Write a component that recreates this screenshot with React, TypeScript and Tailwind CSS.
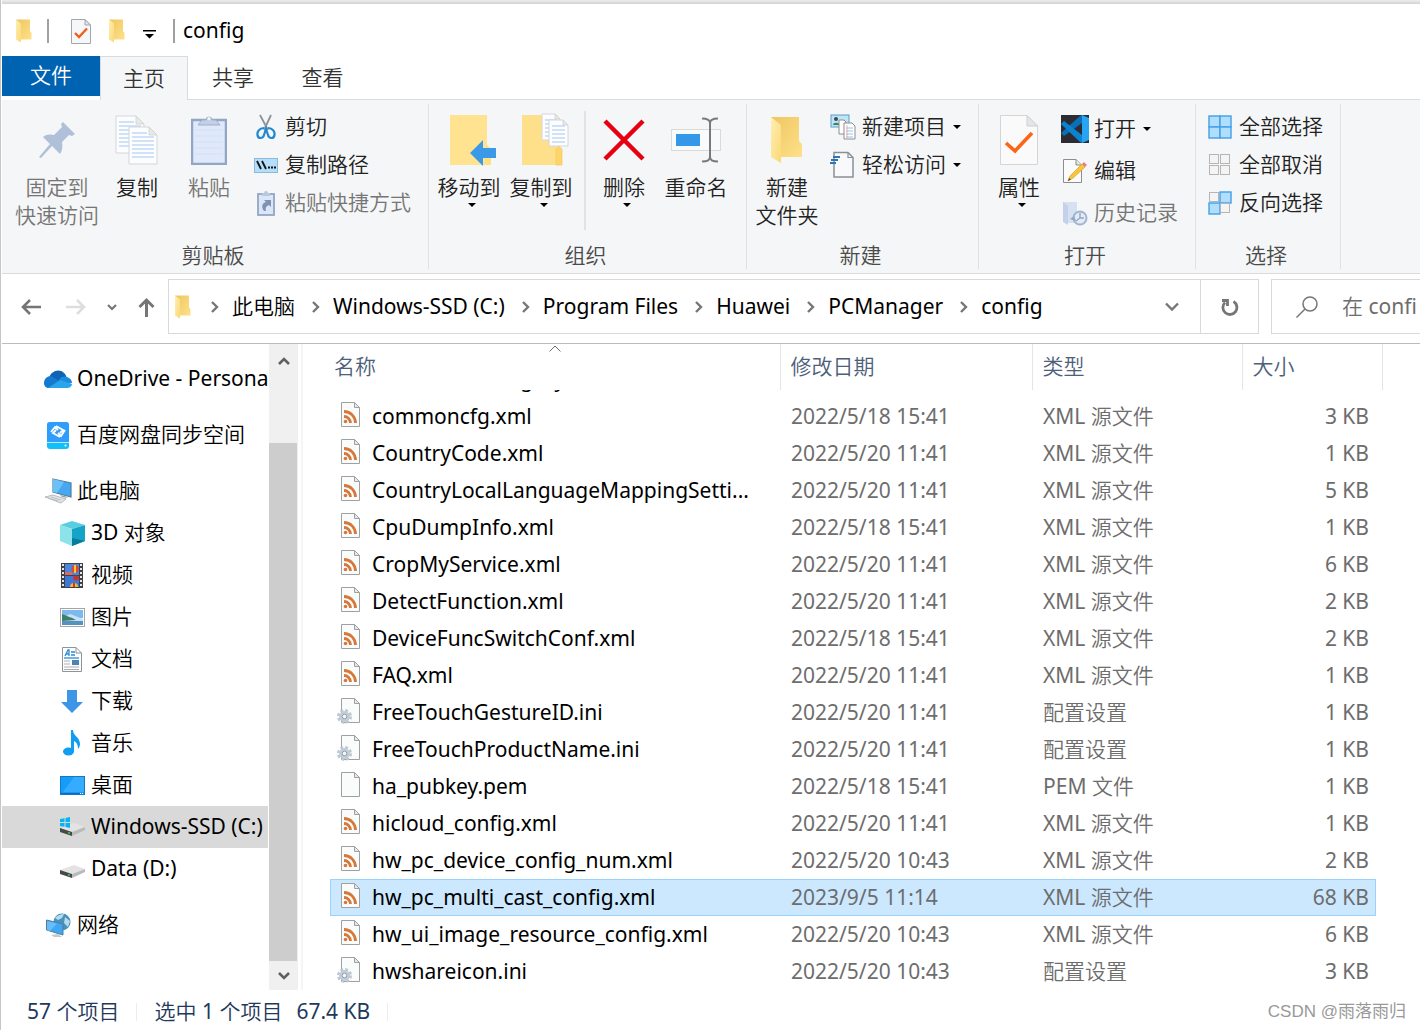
import React, { useState } from "react";

interface FileRow {
  name: string;
  date: string;
  type: string;
  size: string;
  kind: "xml" | "ini" | "plain";
}

const files: FileRow[] = [
  { name: "commoncfg.xml", date: "2022/5/18 15:41", type: "XML 源文件", size: "3 KB", kind: "xml" },
  { name: "CountryCode.xml", date: "2022/5/20 11:41", type: "XML 源文件", size: "1 KB", kind: "xml" },
  { name: "CountryLocalLanguageMappingSetti...", date: "2022/5/20 11:41", type: "XML 源文件", size: "5 KB", kind: "xml" },
  { name: "CpuDumpInfo.xml", date: "2022/5/18 15:41", type: "XML 源文件", size: "1 KB", kind: "xml" },
  { name: "CropMyService.xml", date: "2022/5/20 11:41", type: "XML 源文件", size: "6 KB", kind: "xml" },
  { name: "DetectFunction.xml", date: "2022/5/20 11:41", type: "XML 源文件", size: "2 KB", kind: "xml" },
  { name: "DeviceFuncSwitchConf.xml", date: "2022/5/18 15:41", type: "XML 源文件", size: "2 KB", kind: "xml" },
  { name: "FAQ.xml", date: "2022/5/20 11:41", type: "XML 源文件", size: "1 KB", kind: "xml" },
  { name: "FreeTouchGestureID.ini", date: "2022/5/20 11:41", type: "配置设置", size: "1 KB", kind: "ini" },
  { name: "FreeTouchProductName.ini", date: "2022/5/20 11:41", type: "配置设置", size: "1 KB", kind: "ini" },
  { name: "ha_pubkey.pem", date: "2022/5/18 15:41", type: "PEM 文件", size: "1 KB", kind: "plain" },
  { name: "hicloud_config.xml", date: "2022/5/20 11:41", type: "XML 源文件", size: "1 KB", kind: "xml" },
  { name: "hw_pc_device_config_num.xml", date: "2022/5/20 10:43", type: "XML 源文件", size: "2 KB", kind: "xml" },
  { name: "hw_pc_multi_cast_config.xml", date: "2023/9/5 11:14", type: "XML 源文件", size: "68 KB", kind: "xml" },
  { name: "hw_ui_image_resource_config.xml", date: "2022/5/20 10:43", type: "XML 源文件", size: "6 KB", kind: "xml" },
  { name: "hwshareicon.ini", date: "2022/5/20 10:43", type: "配置设置", size: "3 KB", kind: "ini" },
];

const crumbs = ["此电脑", "Windows-SSD (C:)", "Program Files", "Huawei", "PCManager", "config"];

/* ---------- shared icons ---------- */

function FolderIcon({ className }: { className: string }) {
  return (
    <svg className={className} viewBox="0 0 34 48">
      <defs>
        <linearGradient id="folderBack" x1="0" y1="0" x2="1" y2="1">
          <stop offset="0" stopColor="#edc660" />
          <stop offset="1" stopColor="#ffe08a" />
        </linearGradient>
        <linearGradient id="folderFlap" x1="0" y1="0" x2="1" y2="1">
          <stop offset="0" stopColor="#ffefb4" />
          <stop offset="1" stopColor="#fbd873" />
        </linearGradient>
      </defs>
      <path d="M1 1H29V25L32 28V41H10Z" fill="url(#folderBack)" />
      <path d="M1 1L11 9V47L1 41Z" fill="url(#folderFlap)" />
    </svg>
  );
}

function CaretDown() {
  return (
    <svg width="8" height="4" viewBox="0 0 8 4" className="shrink-0">
      <path d="M0 0H8L4 4Z" fill="#000" />
    </svg>
  );
}

function Crumb() {
  return (
    <svg width="9" height="12" viewBox="0 0 9 12" fill="none" stroke="#767676" strokeWidth="2.400">
      <path d="M2 1L7 6L2 11" />
    </svg>
  );
}

function CheckedDoc() {
  return (
    <svg width="38" height="50" viewBox="0 0 38 50">
      <path d="M.5 .5H27L37.500 11V49.500H.5Z" fill="#fafafa" stroke="#d5d5d5" />
      <path d="M27 .5V11H37.500Z" fill="#e6e6e6" stroke="#cfcfcf" />
      <path d="M6 28L15 36L32 18" fill="none" stroke="#fb6518" strokeWidth="3.600" />
    </svg>
  );
}

function SmallCheckedDoc() {
  return (
    <svg width="20" height="25" viewBox="0 0 20 25">
      <path d="M.5 .5H14L19.500 6V24.500H.5Z" fill="#f6f7f9" stroke="#a3a6aa" />
      <path d="M14 .5V6H19.500Z" fill="#e2e4e6" stroke="#a3a6aa" />
      <path d="M4 14L8 18L16 9.500" fill="none" stroke="#f0601c" strokeWidth="2.400" />
    </svg>
  );
}

/* ---------- ribbon icons ---------- */

function PinIcon() {
  return (
    <svg width="38" height="38" viewBox="0 0 38 38" fill="#b0c0d8">
      <path d="M25 1L37 13L34 15L31 14L24 21C25 26 24 30 22 33L14 25L3 37L1 36L12 23L5 16C8 13 13 13 16 14L24 6L23 3Z" />
    </svg>
  );
}

function Page({ x, y, w, h }: { x: number; y: number; w: number; h: number }) {
  const f = Math.round(w * 0.28);
  const lines: number[] = [];
  for (let i = y + 6; i < y + h - 3; i += 4) lines.push(i);
  return (
    <g>
      <path d={`M${x} ${y}H${x + w - f}L${x + w} ${y + f}V${y + h}H${x}Z`} fill="#fcfdfe" stroke="#d3d6da" />
      {lines.map((l) => (
        <path key={l} d={`M${x + 3} ${l}H${l < y + f + 1 ? x + w - f - 2 : x + w - 3}`} stroke="#c3d9f6" strokeWidth="1.5" />
      ))}
      <path d={`M${x + w - f} ${y}V${y + f}H${x + w}Z`} fill="#e9e9e9" stroke="#cfcfcf" strokeWidth=".8" />
    </g>
  );
}

function CopyIcon() {
  return (
    <svg width="44" height="50" viewBox="0 0 44 50">
      <Page x={1} y={1} w={28} h={37} />
      <Page x={14} y={12} w={28} h={37} />
    </svg>
  );
}

function PasteIcon() {
  return (
    <svg width="36" height="50" viewBox="0 0 36 50">
      <rect x="1" y="5" width="34" height="44" fill="#dfe9fa" stroke="#93a6c4" strokeWidth="2.500" />
      <path d="M7 10L11 5H15A3 3 0 0 1 21 5H25L29 10Z" fill="#c3d0e6" stroke="#9fb0cb" />
      <circle cx="18" cy="3.500" r="1.500" fill="#f5f6f7" />
      <path d="M4 15H32M4 21H32M4 27H32M4 33H32M4 39H32" stroke="#d3e0f5" />
    </svg>
  );
}

function MoveToIcon() {
  return (
    <svg width="58" height="54" viewBox="-8 0 58 54">
      <path d="M2 2H39V32L43 36V52H2Z" fill="#ffdf84" />
      <path d="M2 2H39V32L37 36V52H2Z" fill="#ffe391" />
      <path d="M22 40L35 27V35H48V45H35V53Z" fill="#3b9ae8" />
    </svg>
  );
}

function CopyToIcon() {
  return (
    <svg width="58" height="54" viewBox="-8 0 58 54">
      <path d="M2 2H38V52H2Z" fill="#ffe08a" />
      <path d="M36 52V36L39 33L42 36V52Z" fill="#fdd568" stroke="#f2c85a" strokeWidth=".6" />
      <Page x={22} y={1} w={18} h={26} />
      <Page x={29} y={7} w={19} h={26} />
    </svg>
  );
}

function DeleteIcon() {
  return (
    <svg width="42" height="42" viewBox="0 0 42 42" stroke="#e60012" strokeWidth="4.500">
      <path d="M2 2L40 40M40 2L2 40" />
    </svg>
  );
}

function RenameIcon() {
  return (
    <svg width="50" height="46" viewBox="0 0 50 46" fill="none">
      <rect x=".5" y="12.500" width="49" height="21" fill="#f9fafb" stroke="#dadada" />
      <rect x="5" y="17" width="24" height="12" fill="#3497e8" />
      <path d="M31 1.500C36 1.500 39 3 39 6V40C39 43 36 44.500 31 44.500M47 1.500C42 1.500 39 3 39 6M39 40C39 43 42 44.500 47 44.500" stroke="#7a7a7a" strokeWidth="2" />
    </svg>
  );
}

function CutIcon() {
  return (
    <svg width="20" height="26" viewBox="0 0 20 26" fill="none">
      <path d="M4 1L12 16M15 1L8 16" stroke="#8d9299" strokeWidth="1.800" />
      <path d="M8 14C3 14 1 18 1.500 21C2 25 7 25 8 21L10 15L12 21C13 25 18 25 18.500 21C19 18 17 14 12 14" stroke="#1e88d2" strokeWidth="2.200" />
    </svg>
  );
}

function CopyPathIcon() {
  return (
    <svg width="24" height="15" viewBox="0 0 24 15">
      <rect x=".5" y=".5" width="23" height="14" fill="#b4defa" stroke="#8bb9d8" />
      <path d="M3 3L7 11M8 3L12 11" stroke="#111" strokeWidth="1.800" />
      <path d="M14 9.500H16M17 9.500H19M20 9.500H22" stroke="#111" strokeWidth="2" />
    </svg>
  );
}

function PasteLinkIcon() {
  return (
    <svg width="18" height="26" viewBox="0 0 18 26">
      <rect x="1" y="4" width="16" height="21" fill="#dbe6f7" stroke="#93a6c4" strokeWidth="1.800" />
      <path d="M5 6V3H7A2 2 0 0 1 11 3H13V6Z" fill="#b9c7df" />
      <path d="M7 21C4 17 5 13 9 12L7 10H14V17L12 15C9 16 8 18 9 21Z" fill="#7d92b5" />
    </svg>
  );
}

function NewItemIcon() {
  return (
    <svg width="26" height="26" viewBox="0 0 26 26">
      <rect x="1" y="1" width="18" height="12" fill="#bfe3f8" stroke="#5f9cc5" />
      <circle cx="6" cy="5" r="2" fill="#3c4a50" />
      <path d="M3 11C3 8 9 8 10 11Z" fill="#2d8a66" />
      <path d="M9 6H14L16 8V20H9Z" fill="#fff" stroke="#8d8d8d" />
      <path d="M14 9H22L25 12V25H14Z" fill="#fff" stroke="#8d8d8d" />
      <path d="M16 14H23M16 17H23M16 20H23M16 23H23" stroke="#9ebde8" />
      <path d="M17 11V24" stroke="#e8a0a0" strokeWidth=".8" />
    </svg>
  );
}

function EasyAccessIcon() {
  return (
    <svg width="26" height="28" viewBox="0 0 26 28">
      <path d="M4 1.500H18L23 6.500V26H4Z" fill="#f8f9fa" stroke="#8a8f94" strokeWidth="1.500" />
      <path d="M18 1.500V6.500H23" fill="none" stroke="#8a8f94" strokeWidth="1.200" />
      <path d="M3 6H10M1 9H8M0 12H6" stroke="#2f74b5" strokeWidth="1.800" />
    </svg>
  );
}

function VsCodeIcon() {
  return (
    <svg width="28" height="28" viewBox="0 0 28 28">
      <rect width="28" height="28" fill="#2c2c32" />
      <path d="M0 18L3 21L21 8V0L19 1Z" fill="#0a6fb8" />
      <path d="M0 9L3 6L21 20V28L19 27Z" fill="#0b83d2" />
      <path d="M21 0L28 3V25L21 28Z" fill="#27a4f2" />
    </svg>
  );
}

function EditIcon() {
  return (
    <svg width="26" height="26" viewBox="0 0 26 26">
      <path d="M1.500 1.500H14L19.500 7V24.500H1.500Z" fill="#fbfbfb" stroke="#8d8d8d" />
      <path d="M14 1.500V7H19.500" fill="#e4e4e4" stroke="#8d8d8d" />
      <path d="M6 23L8 18L20 6L23 9L11 20Z" fill="#f8c63c" stroke="#d99c1c" strokeWidth=".7" />
      <path d="M20 6L22 4L25 7L23 9Z" fill="#e8808b" />
      <path d="M6 23L7 20L9 21.500Z" fill="#555" />
    </svg>
  );
}

function HistoryIcon() {
  return (
    <svg width="26" height="26" viewBox="0 0 26 26">
      <path d="M1 2H15V14L16 23H6L1 20Z" fill="#d5e0f1" />
      <path d="M1 2L6 6V25L1 22Z" fill="#c4d2e9" />
      <circle cx="18" cy="18" r="6.500" fill="#e4ebf7" stroke="#a3b4d0" strokeWidth="2" />
      <path d="M18 13V18L14 21M18 18H22" fill="none" stroke="#93a6c4" strokeWidth="1.400" />
      <path d="M8 19L12 16L14 21Z" fill="#93a6c4" />
    </svg>
  );
}

function GridIcon({ on }: { on: boolean[] }) {
  const spots = [
    [1, 1],
    [12, 1],
    [1, 12],
    [12, 12],
  ];
  return (
    <svg width="24" height="24" viewBox="0 0 24 24">
      {spots.map(([x, y], i) =>
        on[i] ? (
          <rect key={i} x={x} y={y} width="11" height="11" fill="#b0deff" stroke="#42a0e6" strokeWidth="1.400" />
        ) : (
          <rect key={i} x={x + 0.5} y={y + 0.5} width="9" height="9" fill="#f4f4f4" stroke="#b5b5b5" />
        )
      )}
    </svg>
  );
}

/* ---------- sidebar icons ---------- */

function OneDriveIcon() {
  return (
    <svg width="28" height="18" viewBox="0 0 28 18">
      <path d="M5 8C7 1 15 -2 20 3C22 5 23 7 22 9L10 13Z" fill="#0f62b4" />
      <path d="M0 13C0 9 3 6 7 6L16 11L6 18H5C2 18 0 16 0 13Z" fill="#1479d0" />
      <path d="M15 10C17 6 21 6 23 7C26 8 28 10 28 13L20 14Z" fill="#1a8ce0" />
      <path d="M4 18L16 10L28 14C28 16 26 18 23 18Z" fill="#2aa5ec" />
    </svg>
  );
}

function BaiduIcon() {
  return (
    <svg width="24" height="27" viewBox="0 0 24 27">
      <rect x="1" y="0" width="22" height="23" rx="2.500" fill="#2f9dfb" />
      <path d="M1 20H23V24Q23 27 20 27H4Q1 27 1 24Z" fill="#10c0f8" />
      <path d="M1 20.500H23" stroke="#bfe9ff" />
      <circle cx="19.500" cy="23.500" r="1" fill="#fff" />
      <path d="M10 4L17 8L14 11M19 8L15 14L12 11M14 15L7 11L10 8M5 10L9 5L12 8" fill="none" stroke="#fff" strokeWidth="1.800" />
    </svg>
  );
}

function PcIcon() {
  return (
    <svg width="28" height="26" viewBox="0 0 28 26">
      <path d="M9 1L27 5V19L9 14Z" fill="#45a8f0" stroke="#51809f" strokeWidth="1.200" />
      <path d="M9 1L20 4L13 15L9 14Z" fill="#6cc2f8" />
      <path d="M16 17L21 18L24 20L18 19Z" fill="#9aa3aa" />
      <path d="M1 19L9 17L22 21L17 25Z" fill="#e2e4e6" stroke="#a7adb3" strokeWidth=".8" />
      <path d="M4 20L14 23M7 19L17 22" stroke="#b0b5ba" strokeWidth=".8" />
    </svg>
  );
}

function CubeIcon() {
  return (
    <svg width="25" height="25" viewBox="0 0 25 25">
      <path d="M0 4L12 0L25 4L12 8Z" fill="#58cfe0" />
      <path d="M0 4L12 8V25L0 20Z" fill="#8ce4ea" />
      <path d="M12 8L25 4V20L12 25Z" fill="#16a3c8" />
      <path d="M12 17L25 20L12 25Z" fill="#077d99" />
    </svg>
  );
}

function VideoIcon() {
  return (
    <svg width="22" height="25" viewBox="0 0 22 25">
      <rect width="22" height="25" fill="#3f4144" />
      <rect x="4" y="1" width="14" height="11" fill="#4b86e0" />
      <rect x="4" y="13" width="14" height="11" fill="#3c78d8" />
      <path d="M2 1V25M20 1V25" stroke="#e6e6e6" strokeWidth="2" strokeDasharray="2 2" />
      <path d="M4 9H11V12H4Z" fill="#d86a6a" />
      <ellipse cx="14" cy="6" rx="3.500" ry="4" fill="#e0482f" />
      <path d="M14 2V10" stroke="#f7c52f" strokeWidth="2" />
      <ellipse cx="15" cy="15" rx="3" ry="2.500" fill="#c7332d" />
      <path d="M9 24A4 4 0 0 1 17 24Z" fill="#f1b62b" />
      <path d="M13 20V24" stroke="#d4382b" strokeWidth="2" />
    </svg>
  );
}

function PictureIcon() {
  return (
    <svg width="25" height="19" viewBox="0 0 25 19">
      <rect x=".5" y=".5" width="24" height="18" fill="#fff" stroke="#a5a5a5" />
      <rect x="2" y="2" width="21" height="8" fill="#7db9ee" />
      <path d="M2 10L10 6L23 11V17H2Z" fill="#c4e2f7" />
      <path d="M2 6C6 8 11 9 16 12L2 13Z" fill="#3f7f66" />
      <rect x="2" y="13" width="21" height="4" fill="#5590bf" />
    </svg>
  );
}

function DocumentIcon() {
  return (
    <svg width="20" height="25" viewBox="0 0 20 25" fill="none">
      <path d="M.5 .5H14L19.500 6V24.500H.5Z" fill="#fdfdfd" stroke="#8f9499" />
      <path d="M14 .5V6H19.500" stroke="#8f9499" />
      <path d="M3 9L6 3H7V9M4.500 7H7M9 5H13M9 8H13" stroke="#2b8bd8" strokeWidth="1.300" />
      <path d="M2 11H17" stroke="#2b8bd8" strokeWidth="1.300" />
      <path d="M2 14H8M2 17H8M2 20H17M2 22.500H17" stroke="#a9adb2" />
      <rect x="10" y="13" width="7" height="5" fill="#4b84b4" />
    </svg>
  );
}

function DownloadIcon() {
  return (
    <svg width="22" height="23" viewBox="0 0 22 23">
      <path d="M6 0H16V12H22L11 23L0 12H6Z" fill="#3e95e5" />
    </svg>
  );
}

function MusicIcon() {
  return (
    <svg width="18" height="26" viewBox="0 0 18 26">
      <ellipse cx="5.500" cy="21.500" rx="5.500" ry="4" fill="#109df2" />
      <path d="M8 0H10C10 6 17 7 17 14C17 16 16 18 15 19C15 14 13 12 11 11V21H8Z" fill="#109df2" />
    </svg>
  );
}

function DesktopIcon() {
  return (
    <svg width="25" height="19" viewBox="0 0 25 19">
      <rect x=".5" y=".5" width="24" height="18" fill="#159bf8" stroke="#1478c4" />
      <path d="M14 1H24V16H3Z" fill="#35acff" />
      <path d="M1 17.500H20" stroke="#0a6cb8" />
      <path d="M20 17.500H24" stroke="#fff" strokeDasharray="1 1" />
    </svg>
  );
}

function DriveIcon({ system }: { system?: boolean }) {
  return (
    <svg width="25" height="20" viewBox="0 0 25 20">
      <path d="M0 11L14 6L25 10L12 15Z" fill="#e3e3e4" />
      <path d="M0 11L12 15V19L0 15Z" fill="#46494a" />
      <path d="M12 15L25 10V13L12 19Z" fill="#b9babc" />
      <circle cx="9" cy="16" r="1" fill="#3ed54a" />
      {system && <path d="M0 2L4.500 1.200V5H0ZM5.500 1L10 0V5H5.500ZM0 6H4.500V9.800L0 9ZM5.500 6H10V11L5.500 10Z" fill="#05b4f0" />}
    </svg>
  );
}

function NetworkIcon() {
  return (
    <svg width="25" height="25" viewBox="0 0 25 25">
      <circle cx="16" cy="9" r="8.500" fill="#4a92bb" />
      <path d="M9 5C12 2 15 1 18 1L16 5L12 7ZM19 4L24 8L22 14L18 10Z" fill="#b5dcec" />
      <path d="M.5 7L17 11V22L.5 17Z" fill="#3fa6f3" stroke="#4f7f9c" />
      <path d="M1 8L11 10.500L4 18L1 17Z" fill="#67bdf8" />
      <path d="M5 22L12 21L16 24H8Z" fill="#c3c9cd" />
    </svg>
  );
}

/* ---------- file icons ---------- */

function FileIcon({ kind }: { kind: FileRow["kind"] }) {
  return (
    <svg width="25" height="31" viewBox="0 0 25 31" className="shrink-0">
      <path d="M4.500 1.500H17.500L22.500 6.500V25.500H4.500Z" fill="#fafbfb" stroke="#9ea1a3" />
      <path d="M17.500 1.500V6.500H22.500Z" fill="#e6e8e9" stroke="#9ea1a3" />
      {kind === "xml" && (
        <g fill="none" stroke="#d5783a" strokeWidth="2.800">
          <path d="M7 10.500A11.500 11.500 0 0 1 18.500 22" />
          <path d="M7 15.500A6.500 6.500 0 0 1 13.500 22" />
          <circle cx="8.500" cy="20.500" r="1.800" fill="#d5783a" stroke="none" />
        </g>
      )}
      {kind === "ini" && (
        <g fill="none">
          <circle cx="7.500" cy="19.500" r="6" stroke="#bcc7d1" strokeWidth="3" strokeDasharray="2.700 2.010" />
          <circle cx="7.500" cy="19.500" r="3.900" fill="#f4f6f8" stroke="#c3ccd5" strokeWidth="3" />
          <circle cx="7.500" cy="19.500" r="2.300" stroke="#8d9fb0" />
        </g>
      )}
    </svg>
  );
}

/* ---------- ribbon pieces ---------- */

function Group({ title, className, children }: { title: string; className: string; children: React.ReactNode }) {
  return (
    <section className={`my-1 flex shrink-0 flex-col border-r border-[#dfe1e3] ${className}`}>
      <div className="flex h-[138px] pl-1">{children}</div>
      <h2 className="pr-1 text-center leading-[27px] text-[#4a4a4a]">{title}</h2>
    </section>
  );
}

function BigButton({ icon, label, caret, disabled }: { icon: React.ReactNode; label: string[]; caret?: boolean; disabled?: boolean }) {
  return (
    <button
      disabled={disabled}
      className="flex w-[72px] shrink-0 flex-col items-center pt-2 leading-7 whitespace-nowrap text-[#222] disabled:text-[#757575]"
    >
      <span className="mb-[5px] flex h-14 items-center justify-center">{icon}</span>
      {label.map((l) => (
        <span key={l}>{l}</span>
      ))}
      {caret && (
        <span className="flex pt-0.5 pl-1.5">
          <CaretDown />
        </span>
      )}
    </button>
  );
}

function SmallButton({ icon, label, caret, disabled, className }: { icon: React.ReactNode; label: string; caret?: boolean; disabled?: boolean; className: string }) {
  return (
    <button disabled={disabled} className={`flex items-center gap-[5px] whitespace-nowrap text-[#222] disabled:text-[#757575] ${className}`}>
      <span className="flex w-7 shrink-0 items-center justify-center">{icon}</span>
      <span className="mr-0.5">{label}</span>
      {caret && <CaretDown />}
    </button>
  );
}

function SideItem({ icon, label, nested, active, gap }: { icon: React.ReactNode; label: string; nested?: boolean; active?: boolean; gap?: boolean }) {
  return (
    <li className={gap ? "pt-3.5" : ""}>
      <a
        href="#"
        className={`flex h-[42px] items-center gap-1 overflow-hidden whitespace-nowrap ${nested ? "pl-[55px]" : "pl-[41px]"} ${
          active ? "bg-[#d9d9d9]" : ""
        }`}
      >
        <span className="flex w-[30px] shrink-0 items-center justify-center">{icon}</span>
        {label}
      </a>
    </li>
  );
}

export default function App() {
  const [selected, setSelected] = useState("hw_pc_multi_cast_config.xml");

  return (
    <div className="relative flex min-h-screen flex-col overflow-hidden border-l border-[#c6c6c6] bg-white pl-px font-['Noto_Sans','Noto_Sans_CJK_SC_DemiLight','Noto_Sans_CJK_SC_Light','Noto_Sans_CJK_SC',sans-serif] text-[21px] text-black">
      <div className="h-1 bg-linear-to-b from-[#eeeeee] to-[#d2d2d2]" />

      {/* Title bar */}
      <header className="flex h-[52px] items-center pt-0.5 pl-[13px]">
        <FolderIcon className="h-6 w-[18px]" />
        <span className="ml-[14px] h-6 w-0.5 bg-[#a0a0a0]" />
        <button aria-label="属性" className="ml-[22px]">
          <SmallCheckedDoc />
        </button>
        <button aria-label="新建文件夹" className="ml-[17px]">
          <FolderIcon className="h-6 w-[18px]" />
        </button>
        <button aria-label="自定义快速访问工具栏" className="ml-[17px] pt-1.5">
          <svg width="13" height="9" viewBox="0 0 13 9">
            <path d="M0 0H13V1.500H0ZM2 4H11L6.500 8.500Z" fill="#000" />
          </svg>
        </button>
        <span className="ml-[17px] h-6 w-0.5 bg-[#a0a0a0]" />
        <h1 className="ml-2">config</h1>
      </header>

      {/* Ribbon tabs */}
      <nav className="flex h-11">
        <button className="mb-1 w-[98px] bg-[#0063b1] text-white">文件</button>
        <button className="w-[88px] border-x border-t border-[#dadbdc] bg-[#f5f6f7] text-[#333]">主页</button>
        <div className="-ml-px flex flex-1 border-b border-[#dadbdc] text-[#333]">
          <button className="w-[92px]">共享</button>
          <button className="w-[87px]">查看</button>
        </div>
      </nav>

      {/* Ribbon */}
      <div className="flex h-[174px] border-b border-[#dadbdc] bg-[#f5f6f7]">
        <Group title="剪贴板" className="w-[427px]">
          <div className="flex pr-2 pl-[15px]">
            <BigButton icon={<PinIcon />} label={["固定到", "快速访问"]} disabled />
          </div>
          <BigButton icon={<CopyIcon />} label={["复制"]} />
          <BigButton icon={<PasteIcon />} label={["粘贴"]} disabled />
          <div className="ml-[7px] flex flex-col pt-1">
            <SmallButton className="h-[38px]" icon={<CutIcon />} label="剪切" />
            <SmallButton className="h-[38px]" icon={<CopyPathIcon />} label="复制路径" />
            <SmallButton className="h-[38px]" icon={<PasteLinkIcon />} label="粘贴快捷方式" disabled />
          </div>
        </Group>
        <Group title="组织" className="w-[318px]">
          <BigButton icon={<MoveToIcon />} label={["移动到"]} caret />
          <BigButton icon={<CopyToIcon />} label={["复制到"]} caret />
          <div className="mt-[7px] mr-0.5 mb-3 ml-[7px] w-0.5 shrink-0 bg-[#e0e2e4]" />
          <BigButton icon={<DeleteIcon />} label={["删除"]} caret />
          <BigButton icon={<RenameIcon />} label={["重命名"]} />
        </Group>
        <Group title="新建" className="w-[232px]">
          <BigButton icon={<FolderIcon className="h-12 w-[34px]" />} label={["新建", "文件夹"]} />
          <div className="ml-1.5 flex flex-col pt-1">
            <SmallButton className="h-[38px]" icon={<NewItemIcon />} label="新建项目" caret />
            <SmallButton className="h-[38px]" icon={<EasyAccessIcon />} label="轻松访问" caret />
          </div>
        </Group>
        <Group title="打开" className="w-[217px]">
          <BigButton icon={<CheckedDoc />} label={["属性"]} caret />
          <div className="ml-1.5 flex flex-col pt-1">
            <SmallButton className="h-[42px]" icon={<VsCodeIcon />} label="打开" caret />
            <SmallButton className="h-[42px]" icon={<EditIcon />} label="编辑" />
            <SmallButton className="h-[42px]" icon={<HistoryIcon />} label="历史记录" disabled />
          </div>
        </Group>
        <Group title="选择" className="w-[145px]">
          <div className="ml-1.5 flex flex-col pt-1">
            <SmallButton className="h-[38px]" icon={<GridIcon on={[true, true, true, true]} />} label="全部选择" />
            <SmallButton className="h-[38px]" icon={<GridIcon on={[false, false, false, false]} />} label="全部取消" />
            <SmallButton className="h-[38px]" icon={<GridIcon on={[false, true, true, false]} />} label="反向选择" />
          </div>
        </Group>
      </div>

      {/* Address bar */}
      <div className="flex h-[70px] items-center border-b border-[#bcbcbc] pb-1">
        <div className="flex w-[166px] shrink-0 items-center gap-[21px] pl-[19px]">
          <button aria-label="后退">
            <svg width="20" height="18" viewBox="0 0 20 18" fill="none" stroke="#767676" strokeWidth="2.600">
              <path d="M20 9H2M9 2L2 9L9 16" />
            </svg>
          </button>
          <button aria-label="前进" className="ml-1">
            <svg width="20" height="18" viewBox="0 0 20 18" fill="none" stroke="#dedede" strokeWidth="2.600">
              <path d="M0 9H18M11 2L18 9L11 16" />
            </svg>
          </button>
          <button aria-label="最近的位置">
            <svg width="10" height="8" viewBox="0 0 10 8" fill="none" stroke="#767676" strokeWidth="2.200">
              <path d="M1 2L5 6L9 2" />
            </svg>
          </button>
          <button aria-label="上移">
            <svg width="17" height="20" viewBox="0 0 17 20" fill="none" stroke="#767676" strokeWidth="3">
              <path d="M8.500 20V3M1.500 10L8.500 3L15.500 10" />
            </svg>
          </button>
        </div>
        <div className="flex h-[55px] min-w-0 flex-1 items-center border border-[#d9d9d9] pl-[5px]">
          <FolderIcon className="h-6 w-[18px] shrink-0" />
          <ol className="ml-[18px] flex min-w-0 flex-1 items-center gap-4 whitespace-nowrap">
            {crumbs.map((c) => (
              <li key={c} className="flex items-center gap-[13px]">
                <Crumb />
                <a href="#">{c}</a>
              </li>
            ))}
          </ol>
          <button aria-label="以前的位置" className="px-5">
            <svg width="16" height="10" viewBox="0 0 16 10" fill="none" stroke="#767676" strokeWidth="2.400">
              <path d="M2 1.500L8 7.500L14 1.500" />
            </svg>
          </button>
        </div>
        <button aria-label="刷新" className="-ml-px flex h-[55px] w-[59px] shrink-0 items-center justify-center border border-[#d9d9d9]">
          <svg width="18" height="18" viewBox="0 0 18 18" fill="none" stroke="#767676" strokeWidth="2.800">
            <path d="M12.500 3.500A7 7 0 1 1 4 4.500" />
            <path d="M1 2.500H6.500V8" />
          </svg>
        </button>
        <div className="ml-3 flex h-[55px] w-[149px] shrink-0 items-center border border-r-0 border-[#d9d9d9] pl-6">
          <svg width="22" height="22" viewBox="0 0 22 22" fill="none" stroke="#767676" strokeWidth="1.500" className="shrink-0">
            <circle cx="14" cy="8" r="7" />
            <path d="M9 13L.5 21.500" />
          </svg>
          <input
            type="text"
            aria-label="搜索"
            placeholder="在 config 中搜索"
            className="mr-1 ml-6 w-full min-w-0 outline-none placeholder:text-[#6d6d6d]"
          />
        </div>
      </div>

      <div className="flex flex-1">
        {/* Navigation pane */}
        <aside className="w-[266px] shrink-0">
          <ul>
            <SideItem icon={<OneDriveIcon />} label="OneDrive - Personal" gap />
            <SideItem icon={<BaiduIcon />} label="百度网盘同步空间" gap />
            <SideItem icon={<PcIcon />} label="此电脑" gap />
            <SideItem icon={<CubeIcon />} label="3D 对象" nested />
            <SideItem icon={<VideoIcon />} label="视频" nested />
            <SideItem icon={<PictureIcon />} label="图片" nested />
            <SideItem icon={<DocumentIcon />} label="文档" nested />
            <SideItem icon={<DownloadIcon />} label="下载" nested />
            <SideItem icon={<MusicIcon />} label="音乐" nested />
            <SideItem icon={<DesktopIcon />} label="桌面" nested />
            <SideItem icon={<DriveIcon system />} label="Windows-SSD (C:)" nested active />
            <SideItem icon={<DriveIcon />} label="Data (D:)" nested />
            <SideItem icon={<NetworkIcon />} label="网络" gap />
          </ul>
        </aside>
        <div className="ml-px flex w-[29px] shrink-0 flex-col bg-[#f0f0f0]">
          <button aria-label="向上滚动" className="flex h-[33px] items-center justify-center">
            <svg width="12" height="10" viewBox="0 0 12 10" fill="none" stroke="#606060" strokeWidth="2.600">
              <path d="M1 8L6 3L11 8" />
            </svg>
          </button>
          <div className="mt-[66px] mr-px flex-1 bg-[#cdcdcd]" />
          <button aria-label="向下滚动" className="flex h-[29px] items-center justify-center">
            <svg width="12" height="10" viewBox="0 0 12 10" fill="none" stroke="#606060" strokeWidth="2.600">
              <path d="M1 2L6 7L11 2" />
            </svg>
          </button>
        </div>
        <div className="ml-[3px] w-0.5 shrink-0 bg-[#f5f5f5]" />

        {/* File list */}
        <main className="min-w-0 flex-1 overflow-hidden pl-[27px]">
          <table className="w-[1052px] table-fixed text-left">
            <colgroup>
              <col className="w-[450px]" />
              <col className="w-[252px]" />
              <col className="w-[210px]" />
              <col className="w-[140px]" />
            </colgroup>
            <thead>
              <tr className="h-[46px] text-[#4c607a]">
                <th className="relative border-r border-[#e5e5e5] p-0 pl-1 font-normal">
                  名称
                  <svg width="12" height="8" viewBox="0 0 12 8" fill="none" stroke="#6d6d6d" className="absolute top-px left-1/2 -translate-x-1/2">
                    <path d="M.5 6.500L6 1L11.500 6.500" />
                  </svg>
                </th>
                <th className="border-r border-[#e5e5e5] p-0 pl-2.5 font-normal">修改日期</th>
                <th className="border-r border-[#e5e5e5] p-0 pl-2.5 font-normal">类型</th>
                <th className="border-r border-[#e5e5e5] p-0 pl-2.5 font-normal">大小</th>
              </tr>
            </thead>
            <tbody>
              {/* row scrolled under the header */}
              <tr>
                <td colSpan={4} className="p-0">
                  <div className="flex h-2 items-end overflow-hidden">
                    <div className="flex h-[37px] items-center pl-[42px]">CloudDataCategory.xml</div>
                  </div>
                </td>
              </tr>
              {files.map((f) => {
                const on = f.name === selected;
                const cell = on ? "border-[#99d1ff] bg-[#cce8ff]" : "border-transparent";
                return (
                  <tr key={f.name} onClick={() => setSelected(f.name)} className="text-[#6d6d6d]">
                    <td className="p-0">
                      <div className={`flex h-[37px] items-center gap-2.5 border-y border-l pl-1.5 text-black ${cell}`}>
                        <FileIcon kind={f.kind} />
                        {f.name}
                      </div>
                    </td>
                    <td className="p-0">
                      <div className={`flex h-[37px] items-center border-y pl-[11px] ${cell}`}>{f.date}</div>
                    </td>
                    <td className="p-0">
                      <div className={`flex h-[37px] items-center border-y pl-[11px] ${cell}`}>{f.type}</div>
                    </td>
                    <td className="p-0">
                      <div className={`mr-1.5 flex h-[37px] items-center justify-end border-y border-r pr-1.5 ${cell}`}>{f.size}</div>
                    </td>
                  </tr>
                );
              })}
            </tbody>
          </table>
        </main>
      </div>

      {/* Status bar */}
      <footer className="flex h-10 items-center pt-[3px] pl-[25px] text-[#1e395b]">
        <span>57 个项目</span>
        <span className="mx-[17px] h-[18px] w-px bg-[#ececec]" />
        <span>选中 1 个项目</span>
        <span className="ml-3.5">67.4 KB</span>
        <span className="ml-[17px] h-[18px] w-px bg-[#ececec]" />
      </footer>

      <span className="absolute right-3.5 bottom-1.5 font-['Liberation_Sans','Noto_Sans_CJK_SC',sans-serif] text-[17px] text-[#999]">
        CSDN @雨落雨归
      </span>
    </div>
  );
}
